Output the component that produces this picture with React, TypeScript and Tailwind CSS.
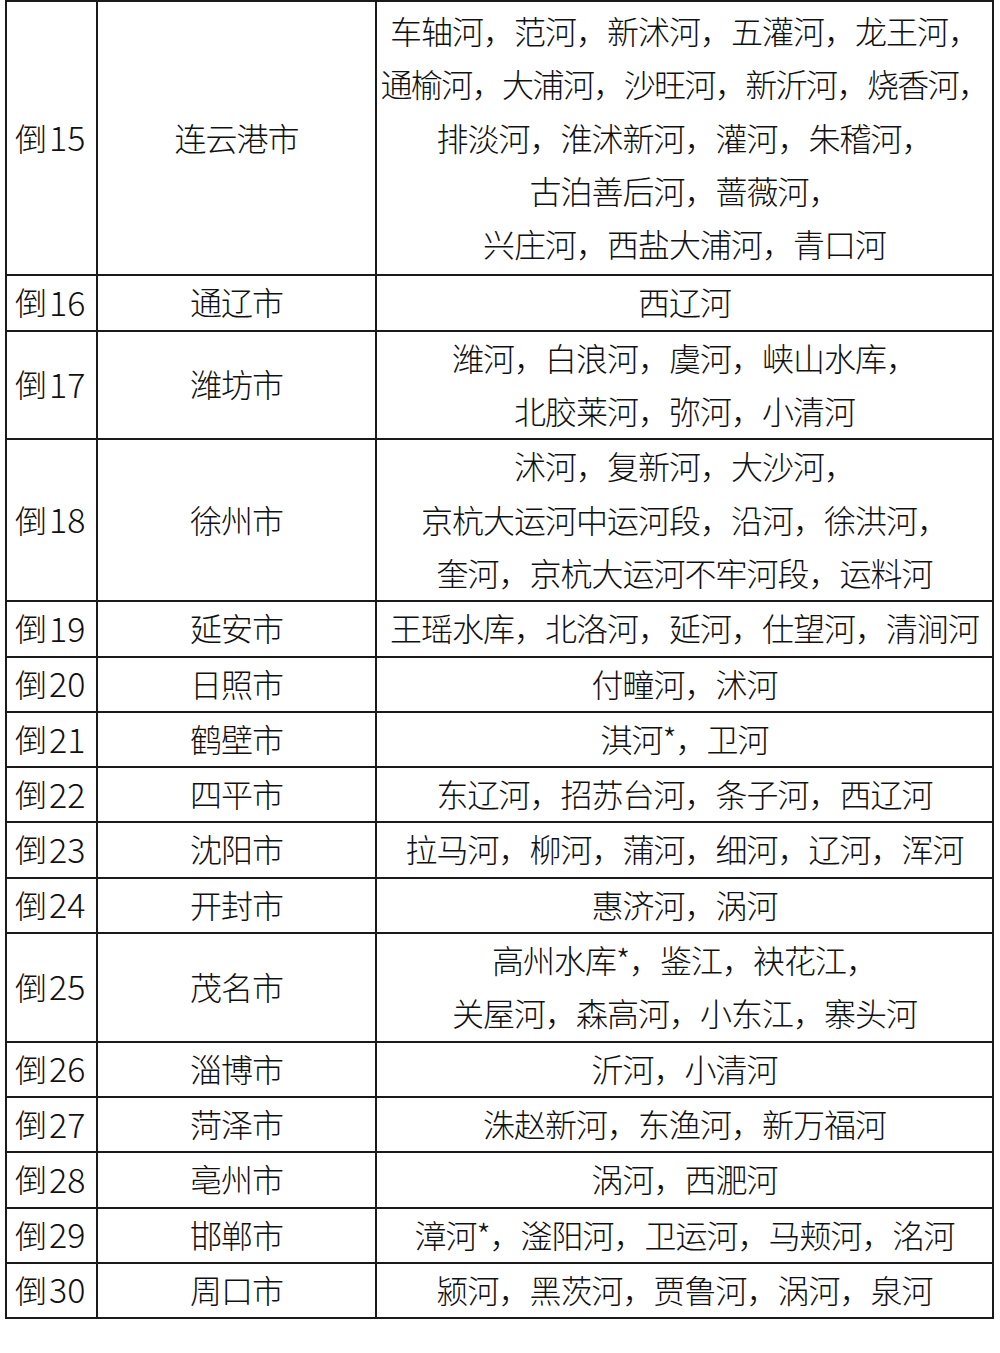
import React from "react"

interface Row {
  rank: number
  city: string
  rivers: string[]
  tight?: number[]
}

const rows: Row[] = [
  {
    rank: 15,
    city: "连云港市",
    rivers: [
      "车轴河，范河，新沭河，五灌河，龙王河，",
      "通榆河，大浦河，沙旺河，新沂河，烧香河，",
      "排淡河，淮沭新河，灌河，朱稽河，",
      "古泊善后河，蔷薇河，",
      "兴庄河，西盐大浦河，青口河",
    ],
    tight: [1],
  },
  { rank: 16, city: "通辽市", rivers: ["西辽河"] },
  { rank: 17, city: "潍坊市", rivers: ["潍河，白浪河，虞河，峡山水库，", "北胶莱河，弥河，小清河"] },
  {
    rank: 18,
    city: "徐州市",
    rivers: ["沭河，复新河，大沙河，", "京杭大运河中运河段，沿河，徐洪河，", "奎河，京杭大运河不牢河段，运料河"],
  },
  { rank: 19, city: "延安市", rivers: ["王瑶水库，北洛河，延河，仕望河，清涧河"] },
  { rank: 20, city: "日照市", rivers: ["付疃河，沭河"] },
  { rank: 21, city: "鹤壁市", rivers: ["淇河*，卫河"] },
  { rank: 22, city: "四平市", rivers: ["东辽河，招苏台河，条子河，西辽河"] },
  { rank: 23, city: "沈阳市", rivers: ["拉马河，柳河，蒲河，细河，辽河，浑河"] },
  { rank: 24, city: "开封市", rivers: ["惠济河，涡河"] },
  { rank: 25, city: "茂名市", rivers: ["高州水库*，鉴江，袂花江，", "关屋河，森高河，小东江，寨头河"] },
  { rank: 26, city: "淄博市", rivers: ["沂河，小清河"] },
  { rank: 27, city: "菏泽市", rivers: ["洙赵新河，东渔河，新万福河"] },
  { rank: 28, city: "亳州市", rivers: ["涡河，西淝河"] },
  { rank: 29, city: "邯郸市", rivers: ["漳河*，滏阳河，卫运河，马颊河，洺河"] },
  { rank: 30, city: "周口市", rivers: ["颍河，黑茨河，贾鲁河，涡河，泉河"] },
]

export default function App() {
  return (
    <div className="min-h-[1353px] w-[1000px] bg-white pl-[5px] font-['Noto_Sans_CJK_SC',sans-serif] text-[32px] font-light leading-[51.3px] tracking-[-1px] text-[#111]">
      <table className="w-[987px] table-fixed border-collapse">
        <colgroup>
          <col className="w-[91px]" />
          <col className="w-[279px]" />
          <col className="w-[617px]" />
        </colgroup>
        <tbody>
          {rows.map((row) => (
            <tr key={row.rank}>
              <td className="border-2 border-[#1a1a1a] p-0 pl-[8px] align-middle whitespace-nowrap">
                <div className="flex h-[53.3px] items-center pb-[2px]">
                  <span>倒</span>
                  <span className="ml-[3px] text-[34px] leading-none tracking-normal">{row.rank}</span>
                </div>
              </td>
              <td className="border-2 border-[#1a1a1a] p-0 text-center align-middle">
                <div className="pb-[2px]">{row.city}</div>
              </td>
              <td className={`border-2 border-[#1a1a1a] p-0 align-middle ${row.rivers.length > 3 ? "py-[3px]" : ""}`}>
                {row.rivers.map((line, i) => (
                  <div
                    key={i}
                    className={`flex justify-center pb-[2px] whitespace-nowrap ${row.tight?.includes(i) ? "tracking-[-1.6px]" : ""}`}
                  >
                    {line}
                  </div>
                ))}
              </td>
            </tr>
          ))}
        </tbody>
      </table>
    </div>
  )
}
